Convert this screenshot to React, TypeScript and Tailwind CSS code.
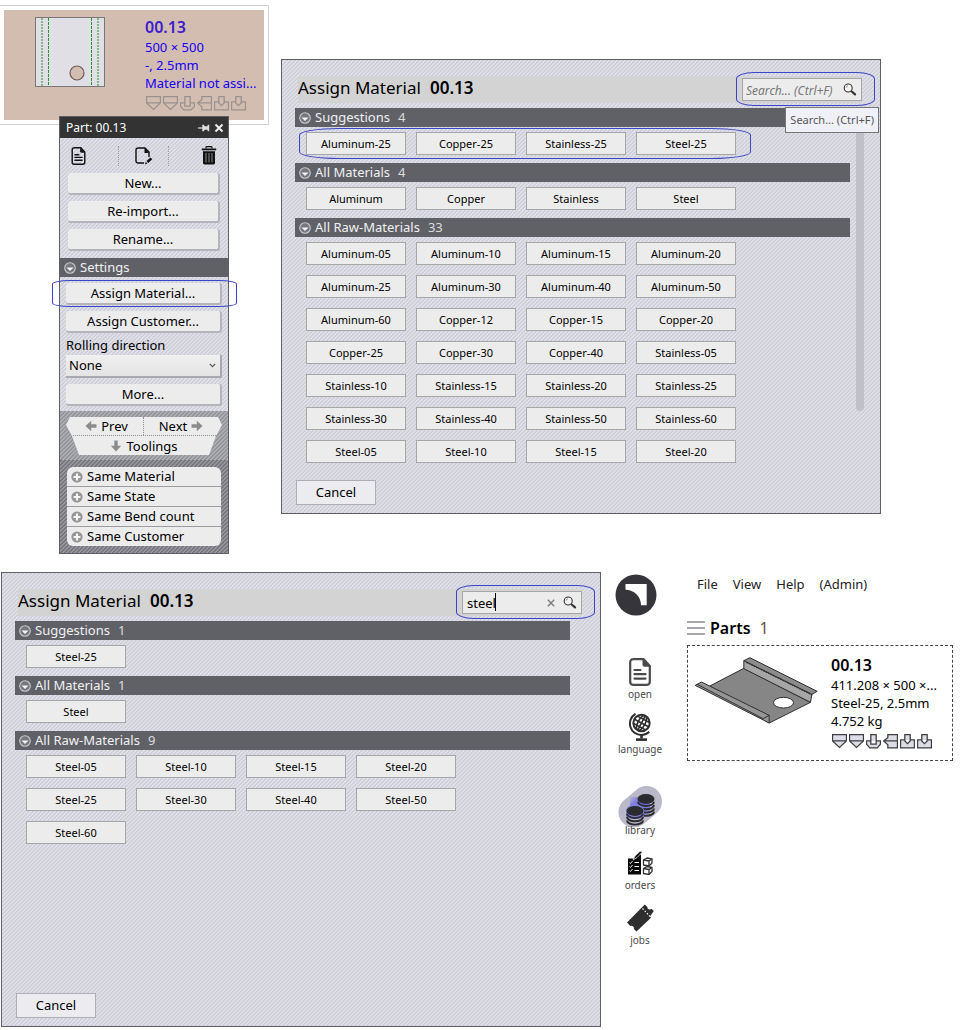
import React from "react";

const hatchLight =
  "bg-[linear-gradient(135deg,#cfcfda_25%,#e0e0e8_25%,#e0e0e8_50%,#cfcfda_50%,#cfcfda_75%,#e0e0e8_75%)] bg-[size:4px_4px]";
const hatchMid =
  "bg-[linear-gradient(135deg,#94949b_25%,#acacb3_25%,#acacb3_50%,#94949b_50%,#94949b_75%,#acacb3_75%)] bg-[size:4px_4px]";
const hatchDark =
  "bg-[linear-gradient(135deg,#77777d_25%,#95959b_25%,#95959b_50%,#77777d_50%,#77777d_75%,#95959b_75%)] bg-[size:4px_4px]";

/* ---------- icons ---------- */

function CollapseIcon() {
  return (
    <svg width="12" height="12" viewBox="0 0 12 12" className="shrink-0" aria-hidden="true">
      <circle cx="6" cy="6" r="5.3" fill="#77787d" stroke="#c8c8cc" strokeWidth="1.1" />
      <path d="M2.5 5.5h7L6 9z" fill="#f2f2f4" />
    </svg>
  );
}

function MagnifierIcon() {
  return (
    <svg width="14" height="14" viewBox="0 0 14 14" aria-hidden="true">
      <circle cx="5.2" cy="5" r="4" fill="#f4f4f4" stroke="#333" strokeWidth="1.1" />
      <path d="M3.2 4.6a2 2 0 0 1 1.6-1.8" fill="none" stroke="#777" strokeWidth=".9" />
      <path d="M8 8l1.200 1.200" stroke="#333" strokeWidth="1.2" />
      <path d="M9.3 9l2.700 2.400" stroke="#333" strokeWidth="2.2" strokeLinecap="round" />
    </svg>
  );
}

function DocumentIcon({ width, height }: { width: number; height: number }) {
  return (
    <svg width={width} height={height} viewBox="0 0 22 28" aria-hidden="true">
      <path
        d="M4 1.2h10.5L20.8 8v15.8a3 3 0 0 1-3 3H4.2a3 3 0 0 1-3-3V4.2a3 3 0 0 1 3-3z"
        fill="none"
        stroke="currentColor"
        strokeWidth="2.2"
      />
      <path d="M13.5 1l7.5 7.8h-5.5a2 2 0 0 1-2-2z" fill="currentColor" />
      <path
        d="M5.5 12h6M5.5 16.2h11M5.5 20.6h11"
        stroke="currentColor"
        strokeWidth="2.2"
        strokeLinecap="round"
      />
    </svg>
  );
}

function EditDocumentIcon() {
  return (
    <svg width="18" height="18" viewBox="0 0 18 18" aria-hidden="true">
      <path d="M9 16H3a2 2 0 0 1-2-2V3a2 2 0 0 1 2-2h7l4 4v5" fill="none" stroke="#111" strokeWidth="1.4" />
      <path d="M9.5 1l4.8 5h-4.8z" fill="#111" />
      <path d="M10 17.5l.8-2.8 1.6 1.7zM11.5 14l4-3.6 1.8 1.8-4 3.7z" fill="#111" />
    </svg>
  );
}

function TrashIcon() {
  return (
    <svg width="16" height="19" viewBox="0 0 16 19" aria-hidden="true">
      <path d="M5 2.5V1.3A.8.8 0 0 1 5.8.6h4.4a.8.8 0 0 1 .8.7v1.2" fill="none" stroke="#111" strokeWidth="1.2" />
      <path d="M.8 3.4h14.4" stroke="#111" strokeWidth="1.8" />
      <path d="M2 5.2h12V17a1.4 1.4 0 0 1-1.4 1.4H3.4A1.4 1.4 0 0 1 2 17z" fill="#111" />
      <path d="M5 7v9.400M8 7v9.400M11 7v9.400" stroke="#a9a9b0" strokeWidth=".8" />
    </svg>
  );
}

function PinIcon() {
  return (
    <svg width="12" height="8" viewBox="0 0 12 8" aria-hidden="true">
      <path d="M0 4h5" stroke="#ddd" strokeWidth="1.2" />
      <path d="M4.300.8h1.500l.8 1.500h3V.8h1.600v6.400H9.600V5.700h-3l-.8 1.500H4.300z" fill="#ddd" />
    </svg>
  );
}

function CloseIcon() {
  return (
    <svg width="10" height="10" viewBox="0 0 10 10" aria-hidden="true">
      <path d="M1.500 1.500l7 7M8.500 1.500l-7 7" stroke="#eee" strokeWidth="2" />
    </svg>
  );
}

function ArrowIcon({ className }: { className?: string }) {
  return (
    <svg width="12" height="12" viewBox="0 0 12 12" className={className} aria-hidden="true">
      <path d="M.5 4.300h5.300V.8L11.600 6l-5.800 5.200V7.700H.5z" fill="#8c8c8c" />
    </svg>
  );
}

function PlusBadge() {
  return (
    <svg width="12" height="12" viewBox="0 0 12 12" aria-hidden="true">
      <circle cx="6" cy="6" r="5.600" fill="#969696" />
      <path d="M6 2.600v6.800M2.600 6h6.800" stroke="#f4f4f4" strokeWidth="2.200" />
    </svg>
  );
}

const toolShapes = [
  "M.5.5h13v6L7 12.5.5 6.500zM.5 6.500h13",
  "M.5.5h13v6L7 12.5.5 6.500zM.5 6.500h13",
  "M4.500.5h5v9h-5zM4.500 6.500h-4v3l3 3.500h7l3-3.500v-3h-4",
  "M4.500.5h9v12.500h-9v-3L.5 6.500l4-3zM.5 6.500h13",
  "M4.500.5h5v6L7 9 4.500 6.500zM4.500 5.500h-4V13h13V5.500h-4",
  "M4.500.5h5v6L7 9 4.500 6.500zM4.500 5.500h-4V13h13V5.500h-4",
];

function ToolIcons({ muted }: { muted?: boolean }) {
  return (
    <div className="flex gap-[2px]">
      {toolShapes.map((d, i) => (
        <svg key={i} width="15" height="15" viewBox="0 0 14 14" aria-hidden="true">
          <path
            d={d}
            fill={muted ? "none" : "#dcdce6"}
            stroke={muted ? "#98928f" : "#3e3e44"}
            strokeWidth="1.200"
          />
        </svg>
      ))}
    </div>
  );
}

function FlatPart() {
  return (
    <svg width="70" height="70" viewBox="0 0 70 70" aria-hidden="true">
      <rect x=".5" y=".5" width="69" height="69" fill="#dfdfe5" stroke="#777" />
      <path d="M7 1v68M63 1v68" stroke="#83bb86" strokeWidth="2" strokeDasharray="2 1" />
      <path d="M13.500 1v68M56.500 1v68" stroke="#1f9a2a" strokeDasharray="3 1" />
      <circle cx="42" cy="56" r="7" fill="#d3bdb0" stroke="#6c5d55" strokeWidth="1.200" />
    </svg>
  );
}

function BentPart() {
  return (
    <svg width="127" height="70" viewBox="40 255 380 210" aria-hidden="true">
      <g stroke="#2f2f2f" strokeWidth="3" strokeLinejoin="round">
        <path d="M90 348L192 295 392 397 268 459z" fill="#868686" />
        <path d="M192 272L396 373 392 397 192 296z" fill="#a6a6a6" />
        <path d="M192 272L210 263 412 364 396 373z" fill="#8b8b8b" />
        <path d="M200 277L400 376" strokeDasharray="5 3" strokeWidth="4" />
        <path d="M46 346L65 336 268 436V459z" fill="#969696" />
        <path d="M52 343L250 446 268 436" fill="none" />
        <ellipse cx="311" cy="398" rx="30" ry="16" fill="#fff" />
      </g>
    </svg>
  );
}

function Logo() {
  return (
    <svg width="42" height="42" viewBox="0 0 42 42" aria-hidden="true">
      <circle cx="21" cy="21" r="20.500" fill="#36353b" />
      <path d="M10.500 10h21.200v21.200H26A15.500 15.500 0 0 0 10.500 15.700z" fill="#fff" />
    </svg>
  );
}

function GlobeIcon() {
  return (
    <svg width="24" height="28" viewBox="0 0 24 28" aria-hidden="true">
      <g fill="none" stroke="#2f2f2f">
        <circle cx="13.500" cy="10" r="8.200" strokeWidth="2" />
        <g strokeWidth="1.600" transform="rotate(28 13.500 10)">
          <ellipse cx="13.500" cy="10" rx="3.600" ry="8.200" />
          <path d="M5.500 10h16M6.800 5.800h13.400M6.800 14.200h13.400M13.500 2v16" />
        </g>
        <path d="M7.500.8A11.400 11.400 0 0 0 13.500 22a11.400 11.400 0 0 0 7.800-3.200" strokeWidth="2" />
        <path d="M13.500 22v3.500" strokeWidth="2.600" />
        <path d="M8 26.600h11" strokeWidth="2.600" />
      </g>
    </svg>
  );
}

function DiscStack({ x, y, layers }: { x: number; y: number; layers: number }) {
  const rims = Array.from({ length: layers }, (_, i) => y + 2.8 + i * 3.3);
  return (
    <g>
      {rims.map((top) => (
        <path
          key={top}
          d={`M${x - 8} ${top}a8 4.200 0 0 0 16 0`}
          fill="none"
          stroke="#2b2b30"
          strokeWidth="1.900"
        />
      ))}
      <ellipse cx={x} cy={y} rx="8.500" ry="4.900" fill="#2b2b30" />
    </g>
  );
}

function LibraryIcon() {
  return (
    <svg width="46" height="42" viewBox="0 0 46 42" aria-hidden="true">
      <defs>
        <filter id="glow" x="-30%" y="-30%" width="160%" height="160%">
          <feGaussianBlur stdDeviation="3" />
        </filter>
      </defs>
      <path d="M17 26L29.500 15.500" stroke="#b9b9c9" strokeWidth="31" strokeLinecap="round" />
      <path d="M17 27L29 15" stroke="#7373e6" strokeWidth="20" strokeLinecap="round" filter="url(#glow)" />
      <DiscStack x={29} y={13} layers={4} />
      <path d="M9 24.500a9 6 0 0 1 18 0v6q-9 5-18 0z" fill="#8585e2" />
      <DiscStack x={18} y={25} layers={3} />
    </svg>
  );
}

function OrdersIcon() {
  return (
    <svg width="26" height="25" viewBox="0 0 26 24" aria-hidden="true">
      <path d="M1 8h6l4-4h3v20H1z" fill="#0a0a0a" />
      <path d="M6 9.500L8 5.500 13 .8q1.800-.6 2 1.200l-5 5z" fill="#0a0a0a" stroke="#fff" strokeWidth=".7" />
      <path d="M7.500 12h4.500M7.500 16h4.500M7.500 20h4.500" stroke="#fff" strokeWidth="1.100" />
      <path d="M2.500 12l1 1 2-2.500M2.500 16l1 1 2-2.500M2.500 20l1 1 2-2.500" stroke="#fff" strokeWidth=".9" fill="none" />
      {[7.5, 16].map((y) => (
        <g key={y} stroke="#333" strokeWidth="1.300" strokeLinejoin="round">
          <path d={`M16.500 ${y + 2}l3.500-2 5 1v4l-3 3-5.500-1z`} fill="#fff" />
          <path d={`M16.500 ${y + 2}l5.500 1v5M22 ${y + 3}l3-2`} fill="none" />
        </g>
      ))}
    </svg>
  );
}

function TicketIcon() {
  return (
    <svg width="28" height="28" viewBox="0 0 28 28" aria-hidden="true">
      <path
        d="M18.800.6l2.500 2.400q0 2 1.600 2.300 1.600.6 2.600-.6l2.300 2.400L24 12.500l1 1.200L10.500 27.500 8 25q.3-1.800-1-2.800-1.300-1-2.700-.2L1 18.500z"
        fill="#2e2e2e"
      />
      <path d="M16.500 4.500l8 8.500" stroke="#fff" strokeWidth="1.100" strokeDasharray="1.600 1.600" />
    </svg>
  );
}

/* ---------- assign material dialog ---------- */

type Section = { title: string; items: string[]; count: number; marked?: boolean };

function MaterialDialog({
  id,
  sections,
  query,
  scrollable,
}: {
  id: string;
  sections: Section[];
  query?: string;
  scrollable?: boolean;
}) {
  return (
    <section
      aria-labelledby={`${id}-title`}
      className={`flex min-h-[455px] min-w-0 flex-1 flex-col border border-[#5f6066] pt-4 pb-2 ${hatchLight}`}
    >
      <header className="mr-[18px] ml-4 flex h-[27px] items-center justify-between bg-[#d3d3d3]">
        <h2 id={`${id}-title`} className="flex gap-[9px] pb-[3px] text-[17px] leading-6">
          Assign Material <span className="font-semibold">00.13</span>
        </h2>
        <div className="relative flex h-[23px] w-[120px] items-center border border-[#a6a6a6] bg-[#ececec]">
          <input
            type="text"
            aria-label="Search materials"
            placeholder="Search... (Ctrl+F)"
            defaultValue={query}
            className={`h-full w-full min-w-0 bg-transparent text-[13px] text-black outline-none placeholder:text-[12px] placeholder:text-[#777] placeholder:italic ${query ? "pl-1" : "pl-[3px]"}`}
          />
          {query && (
            <>
              <span className="absolute top-[1px] left-8 h-[18px] w-px bg-black" />
              <button type="button" aria-label="Clear search" className="px-2">
                <svg width="8" height="8" viewBox="0 0 8 8" aria-hidden="true">
                  <path d="M.8.8l6.400 6.400M7.200.8L.8 7.200" stroke="#7c7c7c" strokeWidth="1.400" />
                </svg>
              </button>
            </>
          )}
          <button type="button" aria-label="Search" className="shrink-0 pr-1">
            <MagnifierIcon />
          </button>
          <span className="pointer-events-none absolute -top-[7px] -right-[14px] -bottom-[6px] -left-[7px] rounded-[18px/7px] border border-[#3a44c8]" />
          {!query && (
            <span
              role="tooltip"
              className="absolute top-7 -right-[18px] z-10 border border-[#767676] bg-[#f0f1f8] px-1 py-1 text-[11px] leading-4 whitespace-nowrap text-[#555]"
            >
              Search... (Ctrl+F)
            </span>
          )}
        </div>
      </header>

      <div className="mt-[5px] flex">
        <div className="ml-[13px] flex min-w-0 flex-1 flex-col gap-2">
          {sections.map((s) => (
            <div key={s.title}>
              <h3 className="flex h-[19px] items-center gap-1 bg-[#606167] pl-1 text-[13px] leading-[19px] text-[#f0f0f2]">
                <CollapseIcon />
                {s.title} <span className="ml-1 text-[#dcdcdf]">{s.count}</span>
              </h3>
              <div className="relative mt-[5px] ml-[11px] grid w-fit grid-cols-[repeat(4,100px)] gap-[10px]">
                {s.items.map((item) => (
                  <button
                    key={item}
                    type="button"
                    className="h-[23px] border border-[#a6a6a6] bg-[#ececec] text-[11px] leading-[21px]"
                  >
                    {item}
                  </button>
                ))}
                {s.marked && (
                  <span className="pointer-events-none absolute -top-1 -right-[15px] -bottom-1 -left-[7px] rounded-[40px/7px] border border-[#3a44c8]" />
                )}
              </div>
            </div>
          ))}
        </div>
        <div className="ml-[6px] w-6">
          {scrollable && <div className="h-[303px] w-2 rounded-b-full bg-[#c0c1c6]" />}
        </div>
      </div>

      <button
        type="button"
        className="mt-auto ml-[14px] h-[25px] w-20 border border-[#adadb3] bg-[#ececf0] text-[13px] leading-[23px]"
      >
        Cancel
      </button>
    </section>
  );
}

const allSections: Section[] = [
  { title: "Suggestions", count: 4, marked: true, items: ["Aluminum-25", "Copper-25", "Stainless-25", "Steel-25"] },
  { title: "All Materials", count: 4, items: ["Aluminum", "Copper", "Stainless", "Steel"] },
  {
    title: "All Raw-Materials",
    count: 33,
    items: [
      "Aluminum-05", "Aluminum-10", "Aluminum-15", "Aluminum-20",
      "Aluminum-25", "Aluminum-30", "Aluminum-40", "Aluminum-50",
      "Aluminum-60", "Copper-12", "Copper-15", "Copper-20",
      "Copper-25", "Copper-30", "Copper-40", "Stainless-05",
      "Stainless-10", "Stainless-15", "Stainless-20", "Stainless-25",
      "Stainless-30", "Stainless-40", "Stainless-50", "Stainless-60",
      "Steel-05", "Steel-10", "Steel-15", "Steel-20",
    ],
  },
];

const steelSections: Section[] = [
  { title: "Suggestions", count: 1, items: ["Steel-25"] },
  { title: "All Materials", count: 1, items: ["Steel"] },
  {
    title: "All Raw-Materials",
    count: 9,
    items: [
      "Steel-05", "Steel-10", "Steel-15", "Steel-20",
      "Steel-25", "Steel-30", "Steel-40", "Steel-50", "Steel-60",
    ],
  },
];

/* ---------- part popup ---------- */

function PanelButton({ children }: { children: React.ReactNode }) {
  return (
    <button
      type="button"
      className="block h-[22px] w-full rounded-[3px] border-r-2 border-b-2 border-[#b4b4ba] bg-[#ececec] text-[13px] leading-5"
    >
      {children}
    </button>
  );
}

function PartPopup() {
  return (
    <div className={`relative w-[170px] border border-[#5f6066] ${hatchLight}`}>
      <div className="flex h-[21px] items-center gap-1 bg-[#333] px-1 text-[12px] text-white">
        <h2 className="flex-1 pl-[2px]">Part: 00.13</h2>
        <button type="button" aria-label="Pin">
          <PinIcon />
        </button>
        <button type="button" aria-label="Close">
          <CloseIcon />
        </button>
      </div>

      <div className="flex h-[35px] items-center">
        <button type="button" aria-label="Details" className="w-[58px] pl-[11px] text-[#111]">
          <DocumentIcon width={15} height={18} />
        </button>
        <span className="h-5 border-l border-dotted border-[#9a9aa2]" />
        <button type="button" aria-label="Edit" className="flex w-[49px] justify-center">
          <EditDocumentIcon />
        </button>
        <span className="h-5 border-l border-dotted border-[#9a9aa2]" />
        <button type="button" aria-label="Delete" className="ml-auto pr-[11px]">
          <TrashIcon />
        </button>
      </div>
      <div className="flex flex-col gap-[6px] px-2 pb-[7px]">
        <PanelButton>New...</PanelButton>
        <PanelButton>Re-import...</PanelButton>
        <PanelButton>Rename...</PanelButton>
      </div>

      <h3 className="flex h-[19px] items-center gap-1 bg-[#606167] pl-1 text-[13px] leading-[19px] text-[#f0f0f2]">
        <CollapseIcon />
        Settings
      </h3>
      <div className="px-[6px] pt-[6px] pb-[5px]">
        <div className="relative">
          <PanelButton>Assign Material...</PanelButton>
          <span className="pointer-events-none absolute -top-[3px] -right-[15px] -bottom-[2px] -left-[14px] rounded-[18px/4px] border border-[#3a44c8]" />
        </div>
        <div className="mt-[6px]">
          <PanelButton>Assign Customer...</PanelButton>
        </div>
        <label htmlFor="rolling" className="mt-[3px] mb-px block text-[13px] leading-[18px]">
          Rolling direction
        </label>
        <div className="relative">
          <select
            id="rolling"
            className="block h-[23px] w-full appearance-none border-r-2 border-b-2 border-[#a8a8ae] bg-linear-to-b from-[#f0f0f0] to-[#e4e4e4] pl-[3px] text-[13px]"
          >
            <option>None</option>
          </select>
          <svg
            width="7"
            height="5"
            viewBox="0 0 7 5"
            className="pointer-events-none absolute top-2 right-[6px]"
            aria-hidden="true"
          >
            <path d="M.8.8l2.700 2.900L6.200.8" fill="none" stroke="#555" strokeWidth="1.200" />
          </svg>
        </div>
        <div className="mt-[6px]">
          <PanelButton>More...</PanelButton>
        </div>
      </div>

      <div className={`px-[6px] pt-[6px] pb-[5px] ${hatchMid}`}>
        <div className="bg-[#ececec] text-[13px] leading-[18px] [clip-path:polygon(4px_0,152px_0,156px_8px,150px_19px,143px_38px,13px_38px,6px_19px,0_8px)]">
          <div className="grid h-[19px] grid-cols-2 border-b border-dotted border-[#8f8f95]">
            <button type="button" className="flex items-center justify-center gap-1 border-r border-dotted border-[#8f8f95] pl-1">
              <ArrowIcon className="rotate-180" />
              Prev
            </button>
            <button type="button" className="flex items-center justify-center gap-1 pr-1">
              Next
              <ArrowIcon />
            </button>
          </div>
          <button type="button" className="flex h-[19px] w-full items-center justify-center gap-1">
            <ArrowIcon className="rotate-90" />
            Toolings
          </button>
        </div>
      </div>

      <div className={`px-[7px] py-[7px] ${hatchDark}`}>
        <div className="divide-y divide-[#9c9ca2] overflow-hidden rounded-md bg-[#ececec]">
          {["Same Material", "Same State", "Same Bend count", "Same Customer"].map((label) => (
            <button
              key={label}
              type="button"
              className="flex h-5 w-full items-center gap-1 pl-1 text-left text-[13px] leading-[19px] last:h-[19px]"
            >
              <PlusBadge />
              {label}
            </button>
          ))}
        </div>
      </div>
    </div>
  );
}

/* ---------- application shell ---------- */

const railItems = [
  { label: "open", icon: <DocumentIcon width={22} height={28} />, gap: "mt-[42px]", labelGap: "" },
  { label: "language", icon: <GlobeIcon />, gap: "mt-[11px]", labelGap: "" },
  { label: "library", icon: <LibraryIcon />, gap: "mt-[29px]", labelGap: "-mt-[6px]" },
  { label: "orders", icon: <OrdersIcon />, gap: "mt-3", labelGap: "mt-[2px]" },
  { label: "jobs", icon: <TicketIcon />, gap: "mt-[11px]", labelGap: "" },
];

export default function App() {
  return (
    <div className="flex min-h-screen flex-col gap-[18px] bg-white font-['Noto_Sans','Open_Sans',sans-serif] text-black">
      <div className="flex items-start">
        <div className="w-[269px] shrink-0 pt-[5px]">
          <article className="border border-l-0 border-[#d2d2d2] p-1">
            <div className="flex h-[110px] bg-[#d3bdb0] pt-[7px] pl-[31px]">
              <FlatPart />
              <div className="ml-10 min-w-0 flex-1 text-[13px] leading-[18px] text-[#1400f5]">
                <h2 className="text-[16px] leading-[21px] font-semibold text-[#3a20d0]">00.13</h2>
                <p>500 × 500</p>
                <p>-, 2.5mm</p>
                <p className="whitespace-nowrap">Material not assi...</p>
                <div className="mt-1 pl-px">
                  <ToolIcons muted />
                </div>
              </div>
            </div>
          </article>
          <div className="-mt-[9px] ml-[59px]">
            <PartPopup />
          </div>
        </div>
        <div className="mt-[59px] mr-[79px] ml-3 flex min-w-0 flex-1">
          <MaterialDialog id="assign-all" sections={allSections} scrollable />
        </div>
      </div>

      <div className="flex items-start pl-px">
        <MaterialDialog id="assign-steel" sections={steelSections} query="steel" />

        <nav aria-label="Main" className="ml-[14px] flex w-[50px] shrink-0 flex-col items-center pt-[2px]">
          <div className="-ml-2">
            <Logo />
          </div>
          {railItems.map((item) => (
            <a
              key={item.label}
              href={`#${item.label}`}
              className={`flex flex-col items-center text-[10px] leading-4 text-[#4a4a4a] ${item.gap}`}
            >
              {item.icon}
              <span className={item.labelGap}>{item.label}</span>
            </a>
          ))}
        </nav>

        <main className="mr-[7px] ml-[22px] w-[266px] shrink-0">
          <div className="flex gap-[15px] pt-[3px] pl-[10px] text-[13px] leading-[18px] text-[#222]">
            <button type="button">File</button>
            <button type="button">View</button>
            <button type="button">Help</button>
            <button type="button">(Admin)</button>
          </div>
          <div className="mt-6 flex h-[22px] items-center">
            <svg width="18" height="14" viewBox="0 0 18 14" aria-hidden="true">
              <path d="M0 1h18M0 7h18M0 13h18" stroke="#8b8b93" strokeWidth="1.500" />
            </svg>
            <h1 className="ml-[5px] text-[16px] leading-[22px] font-semibold">Parts</h1>
            <span className="ml-[9px] text-[16px] text-[#6b5340]">1</span>
          </div>
          <article className="mt-[6px] flex h-[116px] border border-dashed border-[#444] pt-[9px] pl-[5px]">
            <BentPart />
            <div className="ml-[11px] min-w-0 flex-1 text-[13px] leading-[18px]">
              <h2 className="text-[16px] leading-[21px] font-semibold">00.13</h2>
              <p className="whitespace-nowrap">411.208 × 500 ×...</p>
              <p className="whitespace-nowrap">Steel-25, 2.5mm</p>
              <p>4.752 kg</p>
              <div className="mt-1 pl-px">
                <ToolIcons />
              </div>
            </div>
          </article>
        </main>
      </div>
    </div>
  );
}
